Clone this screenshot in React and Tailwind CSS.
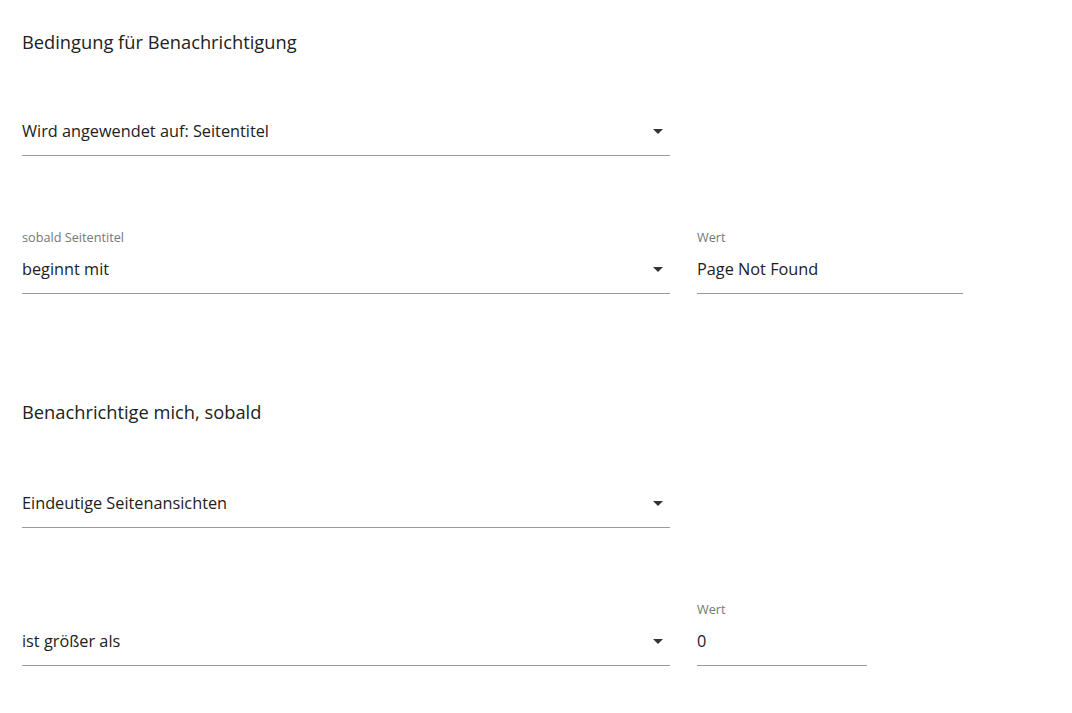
import { useState } from "react";

const Arrow = () => (
  <svg viewBox="0 0 24 24" className="w-6 h-6 fill-[#333]">
    <path d="M7 10l5 5 5-5z" />
  </svg>
);

const SelectField = ({ label, value, className = "" }) => (
  <div className={`flex flex-col w-[648px] ${className}`}>
    {label !== undefined && (
      <div className="h-4 text-[12.7px] leading-4 text-[#777]">{label}</div>
    )}
    <div className="flex items-center justify-between h-[49px] border-b border-[#9a9a9a]">
      <span className="text-[16.3px] leading-6 text-[#212121]">{value}</span>
      <Arrow />
    </div>
  </div>
);

const TextField = ({ label, value, width }) => {
  const [val, setVal] = useState(value);
  return (
    <div className={`flex flex-col ${width}`}>
      <div className="h-4 text-[12.7px] leading-4 text-[#777]">{label}</div>
      <input
        value={val}
        onChange={(e) => setVal(e.target.value)}
        className="h-[49px] border-b border-[#9a9a9a] text-[16.3px] leading-6 text-[#212121] outline-none bg-transparent"
      />
    </div>
  );
};

export default function App() {
  return (
    <div
      className="w-[1072px] h-[713px] bg-white px-[22px] pt-[28px]"
      style={{ fontFamily: '"Open Sans", "Noto Sans", sans-serif' }}
    >
      <h2 className="text-[18.3px] leading-7 text-[#212121]">Bedingung für Benachrichtigung</h2>

      <SelectField value="Wird angewendet auf: Seitentitel" className="mt-[51px]" />

      <div className="flex gap-[27px] mt-[73px]">
        <SelectField label="sobald Seitentitel" value="beginnt mit" />
        <TextField label="Wert" value="Page Not Found" width="w-[266px]" />
      </div>

      <h2 className="text-[18.3px] leading-7 text-[#212121] mt-[104px]">Benachrichtige mich, sobald</h2>

      <SelectField value="Eindeutige Seitenansichten" className="mt-[53px]" />

      <div className="flex gap-[27px] mt-[73px]">
        <SelectField label="" value="ist größer als" />
        <TextField label="Wert" value="0" width="w-[170px]" />
      </div>
    </div>
  );
}
